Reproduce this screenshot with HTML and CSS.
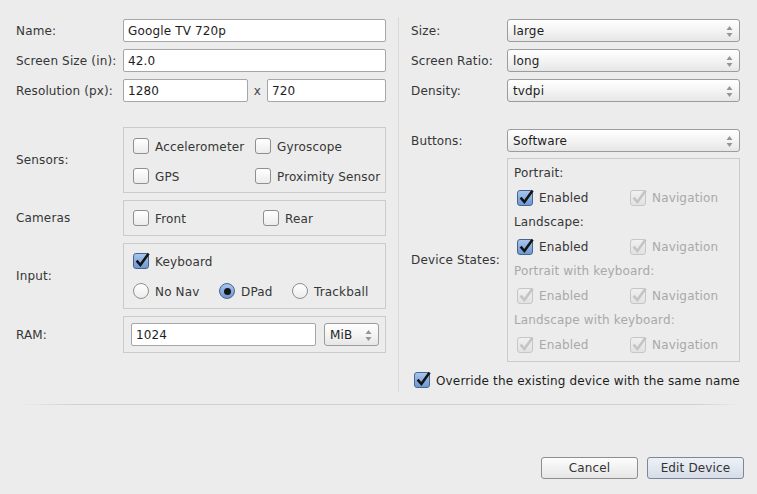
FILE: index.html
```html
<!DOCTYPE html>
<html>
<head>
<meta charset="utf-8">
<link rel="stylesheet" href="styles.css">
</head>
<body>
<div class="dialog">
  <div class="content">
    <div class="col-left">
      <div class="row field-row">
        <span class="lbl">Name:</span>
        <div class="tf grow">Google TV 720p</div>
      </div>
      <div class="row field-row">
        <span class="lbl">Screen Size (in):</span>
        <div class="tf grow">42.0</div>
      </div>
      <div class="row field-row">
        <span class="lbl">Resolution (px):</span>
        <div class="tf res-w">1280</div>
        <span class="times">x</span>
        <div class="tf grow">720</div>
      </div>

      <div class="row group-row sensors-row">
        <span class="lbl">Sensors:</span>
        <div class="group g-sensors">
          <div class="opt"><span class="cb"></span>Accelerometer</div>
          <div class="opt"><span class="cb"></span>Gyroscope</div>
          <div class="opt"><span class="cb"></span>GPS</div>
          <div class="opt"><span class="cb"></span>Proximity Sensor</div>
        </div>
      </div>
      <div class="row group-row">
        <span class="lbl">Cameras</span>
        <div class="group g-cameras">
          <div class="opt"><span class="cb"></span>Front</div>
          <div class="opt"><span class="cb"></span>Rear</div>
        </div>
      </div>
      <div class="row group-row">
        <span class="lbl">Input:</span>
        <div class="group g-input">
          <div class="opt"><span class="cb checked"><svg class="tick" viewBox="0 0 18 18" width="18" height="18"><path d="M3.6 8.6 L7.4 13 L15.6 1.6"/></svg></span>Keyboard</div>
          <div class="radios">
            <div class="opt r-nonav"><span class="rb"></span>No Nav</div>
            <div class="opt r-dpad"><span class="rb on"><span class="dot"></span></span>DPad</div>
            <div class="opt"><span class="rb"></span>Trackball</div>
          </div>
        </div>
      </div>
      <div class="row group-row">
        <span class="lbl">RAM:</span>
        <div class="group g-ram">
          <div class="tf ram-tf">1024</div>
          <div class="combo ram-combo">MiB<svg class="arrows" viewBox="0 0 7 11" width="7" height="11"><polygon points="0.5,4 3.5,0 6.5,4"/><polygon points="0.5,7 6.5,7 3.5,11"/></svg></div>
        </div>
      </div>
    </div>

    <div class="vsep"></div>

    <div class="col-right">
      <div class="row field-row">
        <span class="lbl-r">Size:</span>
        <div class="combo grow">large<svg class="arrows" viewBox="0 0 7 11" width="7" height="11"><polygon points="0.5,4 3.5,0 6.5,4"/><polygon points="0.5,7 6.5,7 3.5,11"/></svg></div>
      </div>
      <div class="row field-row">
        <span class="lbl-r">Screen Ratio:</span>
        <div class="combo grow">long<svg class="arrows" viewBox="0 0 7 11" width="7" height="11"><polygon points="0.5,4 3.5,0 6.5,4"/><polygon points="0.5,7 6.5,7 3.5,11"/></svg></div>
      </div>
      <div class="row field-row">
        <span class="lbl-r">Density:</span>
        <div class="combo grow">tvdpi<svg class="arrows" viewBox="0 0 7 11" width="7" height="11"><polygon points="0.5,4 3.5,0 6.5,4"/><polygon points="0.5,7 6.5,7 3.5,11"/></svg></div>
      </div>
      <div class="row field-row buttons-row">
        <span class="lbl-r">Buttons:</span>
        <div class="combo grow">Software<svg class="arrows" viewBox="0 0 7 11" width="7" height="11"><polygon points="0.5,4 3.5,0 6.5,4"/><polygon points="0.5,7 6.5,7 3.5,11"/></svg></div>
      </div>
      <div class="row states-row">
        <span class="lbl-r">Device States:</span>
        <div class="group g-states">
          <div class="ds-head">Portrait:</div>
          <div class="ds-row">
            <div class="opt ds-en"><span class="cb checked"><svg class="tick" viewBox="0 0 18 18" width="18" height="18"><path d="M3.6 8.6 L7.4 13 L15.6 1.6"/></svg></span>Enabled</div>
            <div class="opt dis"><span class="cb checked dis"><svg class="tick" viewBox="0 0 18 18" width="18" height="18"><path d="M3.6 8.6 L7.4 13 L15.6 1.6"/></svg></span>Navigation</div>
          </div>
          <div class="ds-head">Landscape:</div>
          <div class="ds-row">
            <div class="opt ds-en"><span class="cb checked"><svg class="tick" viewBox="0 0 18 18" width="18" height="18"><path d="M3.6 8.6 L7.4 13 L15.6 1.6"/></svg></span>Enabled</div>
            <div class="opt dis"><span class="cb checked dis"><svg class="tick" viewBox="0 0 18 18" width="18" height="18"><path d="M3.6 8.6 L7.4 13 L15.6 1.6"/></svg></span>Navigation</div>
          </div>
          <div class="ds-head dis">Portrait with keyboard:</div>
          <div class="ds-row">
            <div class="opt ds-en dis"><span class="cb checked dis"><svg class="tick" viewBox="0 0 18 18" width="18" height="18"><path d="M3.6 8.6 L7.4 13 L15.6 1.6"/></svg></span>Enabled</div>
            <div class="opt dis"><span class="cb checked dis"><svg class="tick" viewBox="0 0 18 18" width="18" height="18"><path d="M3.6 8.6 L7.4 13 L15.6 1.6"/></svg></span>Navigation</div>
          </div>
          <div class="ds-head dis">Landscape with keyboard:</div>
          <div class="ds-row">
            <div class="opt ds-en dis"><span class="cb checked dis"><svg class="tick" viewBox="0 0 18 18" width="18" height="18"><path d="M3.6 8.6 L7.4 13 L15.6 1.6"/></svg></span>Enabled</div>
            <div class="opt dis"><span class="cb checked dis"><svg class="tick" viewBox="0 0 18 18" width="18" height="18"><path d="M3.6 8.6 L7.4 13 L15.6 1.6"/></svg></span>Navigation</div>
          </div>
        </div>
      </div>
      <div class="opt override"><span class="cb checked"><svg class="tick" viewBox="0 0 18 18" width="18" height="18"><path d="M3.6 8.6 L7.4 13 L15.6 1.6"/></svg></span>Override the existing device with the same name</div>
    </div>
  </div>

  <div class="hsep"></div>

  <div class="actions">
    <div class="btn">Cancel</div>
    <div class="btn default">Edit Device</div>
  </div>
</div>
</body>
</html>
```

FILE: styles.css
```css
* { box-sizing: border-box; }

html, body {
  margin: 0;
  padding: 0;
  background: #ececec;
}

body {
  font-family: "DejaVu Sans", "Noto Sans", sans-serif;
  font-size: 12px;
  letter-spacing: 0.15px;
  color: #363636;
}

.dialog {
  width: 757px;
  height: 494px;
  display: flex;
  flex-direction: column;
}

.content {
  display: flex;
  padding: 17px 0 0 16px;
}

.col-left {
  width: 370px;
  padding-top: 2px;
  display: flex;
  flex-direction: column;
}

.col-right {
  width: 329px;
  padding: 2px 0 4px 0;
  display: flex;
  flex-direction: column;
}

.vsep {
  width: 1px;
  background: #dadada;
  margin: 0 12px;
  align-self: stretch;
}

.row {
  display: flex;
  align-items: center;
}

.field-row {
  height: 23px;
  margin-bottom: 7px;
}

.field-row:nth-child(3) { margin-bottom: 0; }

.lbl {
  width: 107px;
  flex: none;
  white-space: nowrap;
}

.lbl-r {
  width: 96px;
  flex: none;
  white-space: nowrap;
}

.grow { flex: 1; }

.tf {
  height: 23px;
  background: #ffffff;
  border: 1px solid #a6a6a6;
  border-radius: 2px;
  padding: 0 4px;
  line-height: 22px;
  color: #1e1e1e;
  white-space: nowrap;
}

.res-w { width: 125px; flex: none; }

.times {
  width: 19px;
  text-align: center;
  color: #444;
}

.combo {
  position: relative;
  height: 23px;
  border: 1px solid #9c9c9c;
  border-radius: 3px;
  background: linear-gradient(#ffffff, #f3f3f3 55%, #e6e6e6);
  padding: 1px 6px 0 5px;
  line-height: 21px;
  color: #1e1e1e;
  display: flex;
  align-items: center;
  justify-content: space-between;
}

.arrows polygon { fill: #959595; }

/* groups */
.group {
  border: 1px solid #cbcbcb;
  width: 263px;
}

.group-row { margin-top: 7px; }
.sensors-row { margin-top: 25px; }

.g-sensors {
  height: 66px;
  padding: 10px 0 0 9px;
  display: grid;
  grid-template-columns: 122px auto;
  grid-auto-rows: 16px;
  row-gap: 14px;
}

.g-cameras {
  height: 36px;
  padding-left: 9px;
  display: grid;
  grid-template-columns: 130px auto;
  align-items: center;
}

.g-input {
  height: 66px;
  padding: 9px 0 0 9px;
  display: flex;
  flex-direction: column;
  gap: 14px;
}

.radios {
  display: flex;
}

.r-nonav { width: 86px; }
.r-dpad { width: 73px; }

.g-ram {
  height: 37px;
  padding-left: 7px;
  display: flex;
  align-items: center;
  gap: 8px;
}

.ram-tf { width: 185px; }
.ram-combo { width: 55px; }

/* options */
.opt {
  display: flex;
  align-items: center;
  gap: 6px;
  height: 16px;
  padding-top: 1px;
  white-space: nowrap;
}

.cb {
  position: relative;
  width: 16px;
  height: 16px;
  flex: none;
  margin-top: -1px;
  border: 1px solid #8f8f8f;
  border-radius: 3px;
  background: linear-gradient(#ffffff, #ececec);
}

.cb.checked {
  border-color: #44658f;
  background: linear-gradient(#a8c5ec, #6f99d2);
}

.cb.checked.dis {
  border-color: #c6c6c6;
  background: linear-gradient(#f0f0f0, #e2e2e2);
}

.tick {
  position: absolute;
  left: -1px;
  top: -2px;
  overflow: visible;
}

.tick path {
  fill: none;
  stroke: #141414;
  stroke-width: 2.6;
  stroke-linejoin: miter;
}

.cb.dis .tick path { stroke: #c4c4c4; }

.rb {
  width: 16px;
  height: 16px;
  flex: none;
  margin-top: -1px;
  border: 1px solid #8f8f8f;
  border-radius: 50%;
  background: linear-gradient(#ffffff, #ececec);
  display: flex;
  align-items: center;
  justify-content: center;
}

.rb.on {
  border-color: #44658f;
  background: linear-gradient(#a8c5ec, #6f99d2);
}

.dot {
  width: 7px;
  height: 7px;
  border-radius: 50%;
  background: #161616;
}

.dis { color: #a9a9a9; }

/* right side */
.buttons-row { margin-top: 27px; margin-bottom: 6px; }

.states-row { align-items: center; }

.g-states {
  width: 234px;
  height: 204px;
  padding: 2px 0 0 6px;
  display: flex;
  flex-direction: column;
}

.ds-head {
  height: 24px;
  line-height: 24px;
  white-space: nowrap;
}

.ds-row {
  height: 25px;
  display: flex;
  align-items: center;
  padding-left: 3px;
}

.ds-en { width: 113px; }

.override {
  margin: 10px 0 0 3px;
  color: #1e1e1e;
}

.hsep {
  height: 1px;
  margin: 12px 17px 0 20px;
  background: linear-gradient(to right, rgba(210,210,210,0), #d0d0d0 8%, #d0d0d0 94%, rgba(210,210,210,0));
}

.actions {
  display: flex;
  justify-content: flex-end;
  gap: 9px;
  padding-right: 13px;
  margin-top: 52px;
}

.btn {
  width: 97px;
  height: 22px;
  border: 1px solid #8e8e8e;
  border-radius: 3px;
  background: linear-gradient(#fdfdfd, #e6e6e6);
  text-align: center;
  line-height: 21px;
  color: #333;
}

.btn.default {
  border-color: #7d8799;
  background: linear-gradient(#eef1f6, #d6dde8);
}
```
